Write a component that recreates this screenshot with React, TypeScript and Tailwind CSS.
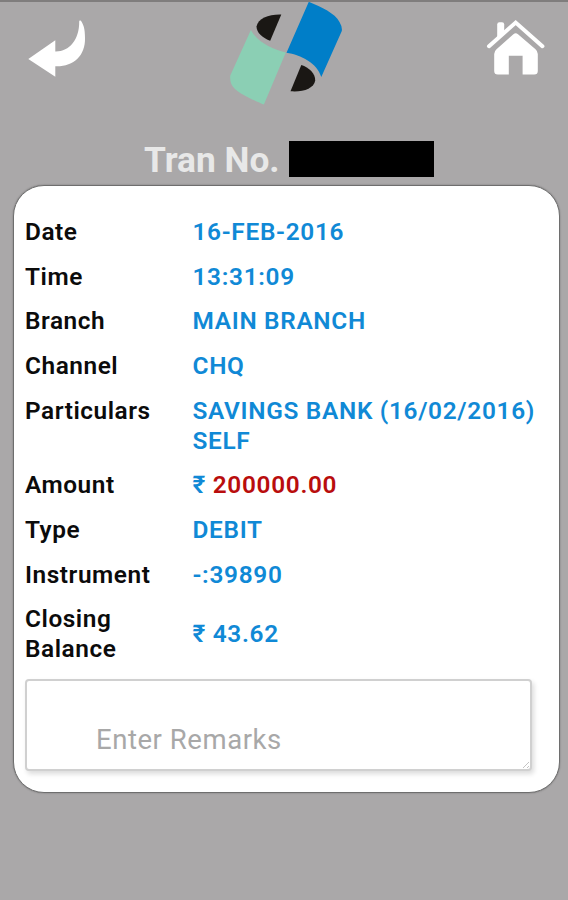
import type { ReactNode } from 'react';
import clsx from 'clsx';

type DetailRowProps = {
  label: string;
  children: ReactNode;
  center?: boolean;
};

function BackIcon() {
  return (
    <svg width="60" height="60" viewBox="0 0 60 60" fill="white">
      <path d="M1.3 41 28.3 22.3V33.6C42 34 52.5 22 52.2 3.6Q52.2 2 53.6 2.6C56.5 6 58 11 58 20C58.5 38 46 49 28.3 48.3V58.8Z" />
    </svg>
  );
}

function HomeIcon() {
  return (
    <svg width="60" height="60" viewBox="0 0 60 60" fill="white">
      <path d="M11.2 21V6.5Q11.2 4.3 13.4 4.3H16Q18.2 4.3 18.2 6.5V14Z" />
      <path d="M3 28.2 29.7 4.6 56.4 28.2" fill="none" stroke="white" strokeWidth="4" strokeLinecap="round" />
      <path d="M27.4 16.2Q29.7 14.2 32 16.2L49.5 31.2Q51.8 33.2 51.8 36V53Q51.8 56.6 48.2 56.6H36.6V37.8H22.8V56.6H11.8Q8.2 56.6 8.2 53V36Q8.2 33.2 10.5 31.2Z" />
    </svg>
  );
}

function Logo() {
  return (
    <svg width="114" height="106" viewBox="0 0 114 106">
      <path d="M78.8 1.8C91 7 105 13 109.5 22Q112.5 27 111.8 31L91.3 77C87 63 71 55 56.5 52.8Z" fill="#007ec8" />
      <path d="M20.9 30C27 42 42 49 55.8 52.5L33.9 104.6C24 100 5 93 1.3 84Q-.3 79 .3 75.5Z" fill="#8bcfb4" />
      <path d="M51.3 14.6 40.2 40.8C33 38 26.5 33 26.5 26.5C28 18.5 39 14.2 51.3 14.6Z" fill="#1a1714" />
      <path d="M71.3 65 60.5 91.3C73 92.3 84 88.5 85.2 80.5C85.5 73.5 79 67.5 71.3 65Z" fill="#1a1714" />
    </svg>
  );
}

function DetailRow({ label, children, center }: DetailRowProps) {
  return (
    <div className={clsx('flex py-[7.35px] leading-[30px]', center ? 'items-center' : 'items-start')}>
      <dt className="w-[167.5px] shrink-0 pr-8 tracking-[0.55px] text-[#0b0b0b]">{label}</dt>
      <dd className="flex-1 tracking-[0.68px] text-[#1089d6]">{children}</dd>
    </div>
  );
}

export default function App() {
  return (
    <main className="h-[900px] w-[568px] overflow-hidden border-t-2 border-[#7f7d7d] bg-[#aaa8a9] font-[Roboto,sans-serif]">
      <header className="-mt-0.5 flex h-[137px] items-start justify-between pr-[22px] pl-[27px]">
        <div className="pt-[18px]">
          <BackIcon />
        </div>
        <div>
          <Logo />
        </div>
        <div className="pt-[18px]">
          <HomeIcon />
        </div>
      </header>

      <div className="flex h-[48px] items-start pl-[144px]">
        <h1 className="w-[145px] pt-[3px] text-[35.3px] leading-[41px] font-bold whitespace-nowrap text-[#e8e8e8]">Tran No.</h1>
        <div className="mt-[3.5px] h-[36.5px] w-[145px] bg-black" />
      </div>

      <section className="ml-[13px] h-[608px] w-[547px] rounded-[31px] border border-[#6e6e6e] bg-white pt-[23.5px] pr-3 pl-[11px] shadow-[0_0_2px_rgba(0,0,0,0.3)]">
        <dl className="text-[24.4px] font-semibold">
          <DetailRow label="Date">16-FEB-2016</DetailRow>
          <DetailRow label="Time">13:31:09</DetailRow>
          <DetailRow label="Branch">MAIN BRANCH</DetailRow>
          <DetailRow label="Channel">CHQ</DetailRow>
          <DetailRow label="Particulars">
            <span className="whitespace-nowrap">SAVINGS BANK (16/02/2016)</span>
            <br />
            SELF
          </DetailRow>
          <DetailRow label="Amount">
            ₹ <span className="text-[#b90d0d]">200000.00</span>
          </DetailRow>
          <DetailRow label="Type">DEBIT</DetailRow>
          <DetailRow label="Instrument">-:39890</DetailRow>
          <DetailRow label="Closing Balance" center>
            ₹ 43.62
          </DetailRow>
        </dl>
        <div className="relative mt-[7px] w-[507px]">
          <textarea
            placeholder="Enter Remarks"
            className="block h-[92px] w-full resize-none rounded-[4px] border-2 border-[#d0d0d0] bg-white pt-[43px] pl-[69px] text-[27.5px] leading-[32px] tracking-[0.55px] shadow-[2px_3px_5px_rgba(0,0,0,0.14)] placeholder:text-[#a8a8a8]"
          />
          <svg className="absolute right-[2px] bottom-[2px]" width="8" height="8" viewBox="0 0 8 8" stroke="#c4c4c4">
            <path d="M1 7 7 1M5 7 7 5" />
          </svg>
        </div>
      </section>
    </main>
  );
}
